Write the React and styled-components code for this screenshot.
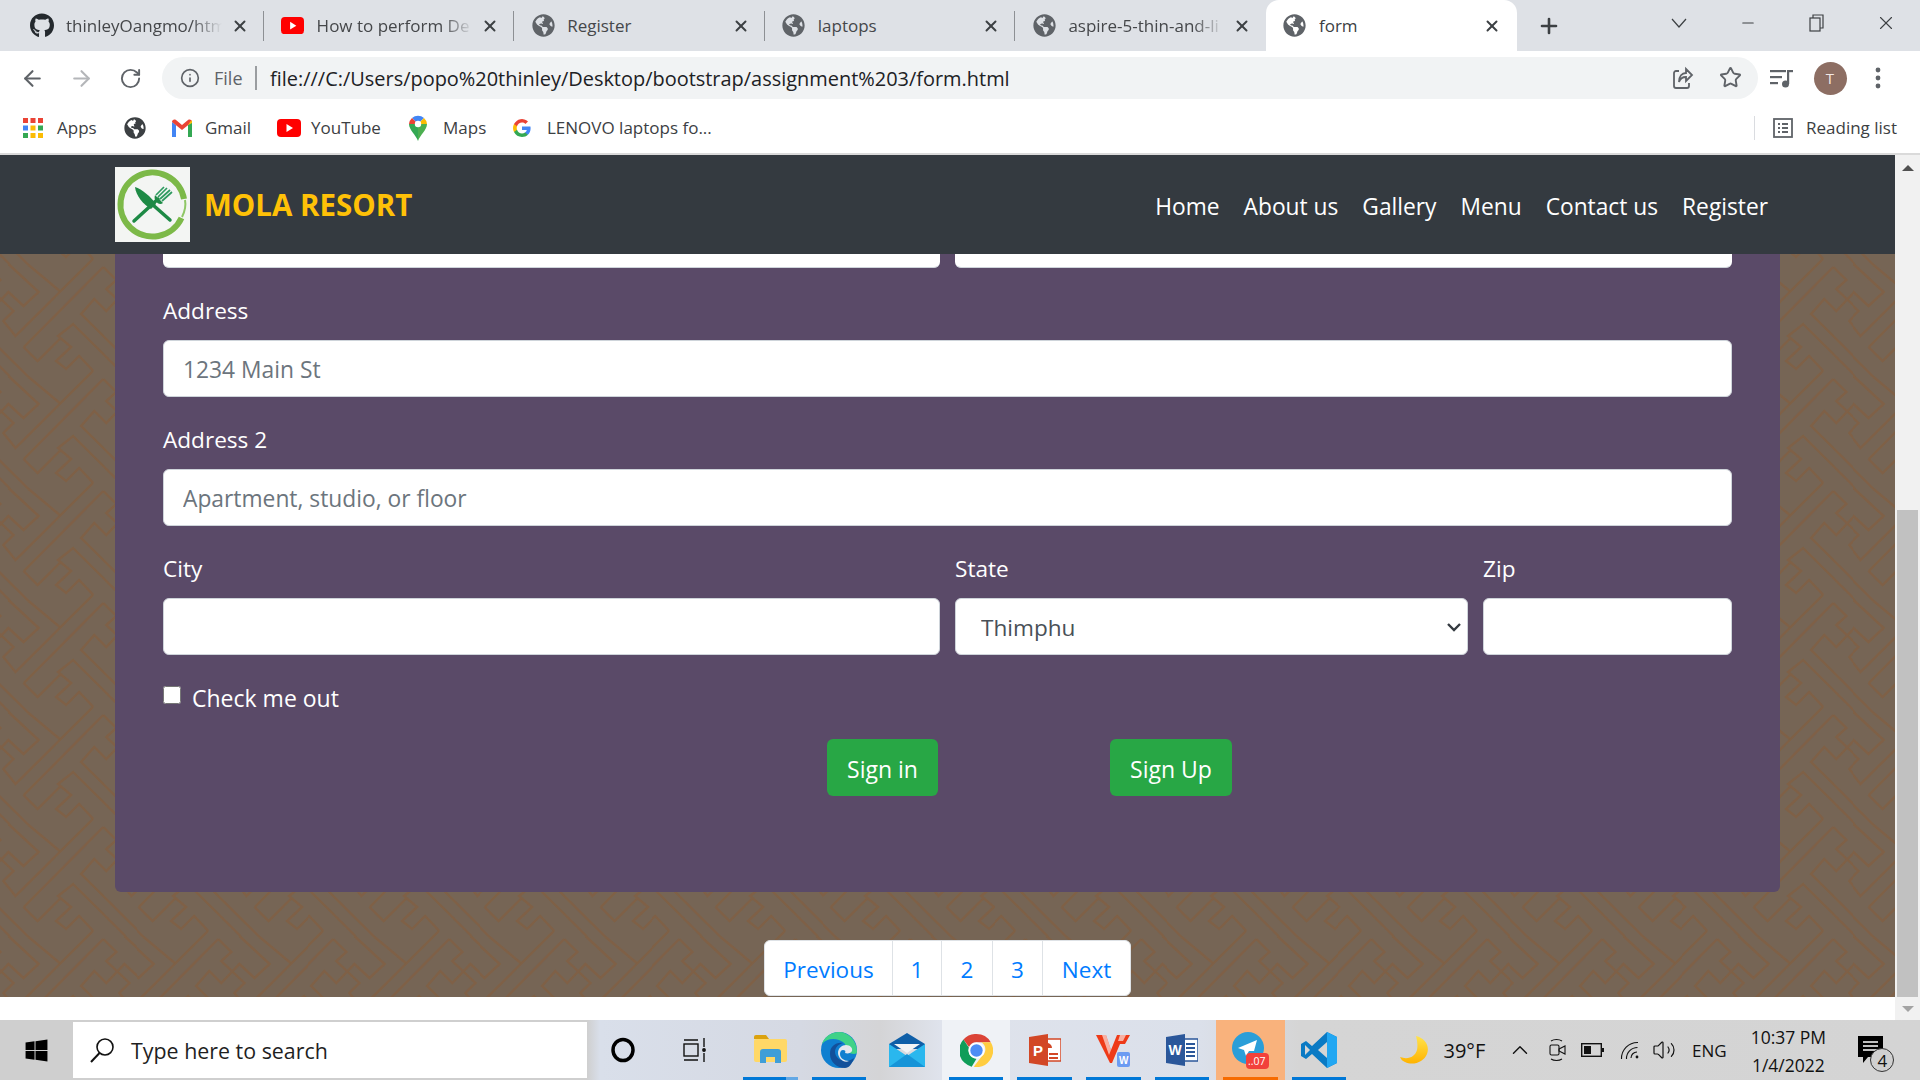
import React from 'react';
import styled, { createGlobalStyle } from 'styled-components';
import { ArrowLeft, ArrowRight, RotateCw, Info, Star, X, Plus, Minus, ChevronUp, Volume2 } from 'lucide-react';
import { FaGithub, FaGlobeAmericas, FaWindows } from 'react-icons/fa';

const UI_FONT = '"Open Sans", "Noto Sans", sans-serif';

const TILE_W = 115.33;
const TILE_H = 112;
const keyLines = [
  '52,3 65,16 55,25 78,47 68,57 80,72 118,34 157,-5',
  '42,107 28,92 15,105 5,97 20,83 7,72 22,60 74,112',
  '73,0 103,28 88,42 73,28 55,47 43,35 30,50 93,113',
  '93,1 124,27',
  '52,3 -27,83',
  '88,83 102,97 125,74',
];
const tileCopies = [-1, 0, 1].flatMap((i) =>
  [-1, 0, 1].map((j) => `<g transform="translate(${i * TILE_W} ${j * TILE_H})">${keyLines.map((p) => `<polyline points="${p}"/>`).join('')}</g>`)
);
const tileSvg = `<svg xmlns="http://www.w3.org/2000/svg" width="${TILE_W}" height="${TILE_H}" viewBox="0 0 ${TILE_W} ${TILE_H}"><defs><filter id="b" x="-5%" y="-5%" width="110%" height="110%"><feGaussianBlur stdDeviation="0.6"/></filter></defs><rect width="100%" height="100%" fill="#766555"/><g filter="url(#b)" fill="none" stroke="#7f6146" stroke-width="2.4">${tileCopies.join('')}</g></svg>`;
const tileUrl = `url("data:image/svg+xml,${encodeURIComponent(tileSvg)}")`;

const chevronUrl = `url("data:image/svg+xml,${encodeURIComponent('<svg xmlns="http://www.w3.org/2000/svg" width="16" height="16" viewBox="0 0 16 16"><path d="M2 5l6 6 6-6" fill="none" stroke="#343a40" stroke-width="2.4"/></svg>')}")`;

const GlobalStyle = createGlobalStyle`
  html, body { margin: 0; padding: 0; overflow: hidden; }
  body { font-family: ${UI_FONT}; }
  * { box-sizing: border-box; }
`;

const Screen = styled.div`
  width: 1920px;
  height: 1080px;
  display: flex;
  flex-direction: column;
  overflow: hidden;
  background: #fff;
`;

/* browser chrome */
const TabStrip = styled.div`
  height: 51px;
  flex: none;
  display: flex;
  background: #dee1e6;
  padding-left: 13px;
`;

const Tab = styled.div`
  position: relative;
  width: 250.6px;
  height: 51px;
  display: flex;
  align-items: center;
  padding-left: 17px;
  color: ${(p) => (p.$active ? '#3c4043' : '#45474a')};
  background: ${(p) => (p.$active ? '#fff' : 'transparent')};
  border-radius: 13px 13px 0 0;
  &::after {
    content: '';
    position: absolute;
    right: 0;
    top: 11px;
    height: 30px;
    width: 1px;
    background: ${(p) => (p.$divider ? '#8d9094' : 'transparent')};
  }
`;

const Favicon = styled.span`
  width: 24px;
  height: 24px;
  flex: none;
  display: flex;
  align-items: center;
  justify-content: center;
  color: ${(p) => p.$color || '#5f6368'};
  margin-right: 12px;
`;

const TabTitle = styled.span`
  width: 156px;
  flex: none;
  font-size: 17px;
  white-space: nowrap;
  overflow: hidden;
  ${(p) => p.$fade && 'mask-image: linear-gradient(90deg, #000 80%, transparent 100%);'}
`;

const TabClose = styled.span`
  width: 18px;
  height: 18px;
  margin-left: 8.5px;
  flex: none;
  display: flex;
  align-items: center;
  justify-content: center;
  color: #3c4043;
`;

const NewTab = styled.span`
  margin-left: 20px;
  height: 51px;
  display: flex;
  align-items: center;
  color: #3c4043;
`;

const WindowControls = styled.div`
  margin-left: auto;
  display: flex;
`;

const WindowButton = styled.span`
  width: 69px;
  height: 45px;
  display: flex;
  align-items: center;
  justify-content: center;
  color: #3c4043;
`;

const Toolbar = styled.div`
  height: 51px;
  flex: none;
  display: flex;
  align-items: center;
  padding: 3px 0 0 8px;
  background: #fff;
`;

const NavButton = styled.span`
  width: 49px;
  display: flex;
  justify-content: center;
  color: ${(p) => (p.$dim ? '#b4b6b9' : '#5f6368')};
`;

const Omnibox = styled.div`
  width: 1596px;
  height: 42px;
  margin-left: 7px;
  border-radius: 21px;
  background: #f1f3f4;
  display: flex;
  align-items: center;
  padding-left: 18px;
  font-size: 18px;
`;

const SiteLabel = styled.span`
  width: 41px;
  margin-left: 14px;
  color: #5f6368;
  font-size: 18px;
`;

const UrlDivider = styled.span`
  width: 2px;
  height: 24px;
  background: #9a9da0;
`;

const UrlText = styled.span`
  margin-left: 13px;
  color: #202124;
  font-size: 19.95px;
  white-space: nowrap;
`;

const OmniActions = styled.div`
  margin-left: auto;
  display: flex;
  gap: 25px;
  padding-right: 16px;
  color: #5f6368;
`;

const ToolbarIcon = styled.span`
  width: 48px;
  display: flex;
  justify-content: center;
  color: #5f6368;
  &:first-of-type { margin-left: 10px; }
`;

const Avatar = styled.span`
  width: 33px;
  height: 33px;
  border-radius: 50%;
  background: #8d6e63;
  color: #f3e9e5;
  font-size: 15px;
  display: flex;
  align-items: center;
  justify-content: center;
`;

const BookmarksBar = styled.div`
  height: 53px;
  flex: none;
  display: flex;
  align-items: center;
  padding: 0 0 0 23px;
  background: #fff;
  border-bottom: 2px solid #dadada;
  font-size: 17px;
  color: #3c4043;
`;

const Bookmark = styled.div`
  width: ${(p) => p.$w}px;
  flex: none;
  display: flex;
  align-items: center;
  white-space: nowrap;
`;

const BookmarkIcon = styled.span`
  width: 34px;
  flex: none;
  display: flex;
`;

const ReadingList = styled.div`
  margin-left: auto;
  height: 24px;
  display: flex;
  align-items: center;
  gap: 13px;
  padding-left: 18px;
  width: 166px;
  border-left: 1px solid #dadce0;
`;

/* page inside the browser */
const Viewport = styled.div`
  flex: 1;
  min-height: 0;
  display: flex;
`;

const Page = styled.div`
  flex: 1;
  min-width: 0;
  display: flex;
  flex-direction: column;
  background: #fff;
  padding-bottom: 23px;
`;

const Navbar = styled.nav`
  height: 99px;
  flex: none;
  display: flex;
  align-items: center;
  padding: 0 127px 0 115px;
  background: #343a40;
`;

const Brand = styled.span`
  margin-left: 14px;
  color: #ffc107;
  font-size: 29.5px;
  font-weight: 700;
  white-space: nowrap;
`;

const NavLinks = styled.div`
  margin-left: auto;
  padding-top: 3px;
  display: flex;
  gap: 24px;
`;

const NavLink = styled.a`
  color: #fff;
  font-size: 22.75px;
  white-space: nowrap;
`;

const Backdrop = styled.main`
  flex: 1;
  min-height: 0;
  display: flex;
  flex-direction: column;
  align-items: center;
  background-image: ${tileUrl};
  background-size: ${TILE_W}px ${TILE_H}px;
  background-position: 51px 10px;
`;

const FormPanel = styled.form`
  width: 1665px;
  height: 638px;
  flex: none;
  padding: 0 48px;
  background: #5a4a68;
  border-radius: 0 0 6px 6px;
`;

const Row = styled.div`
  display: flex;
  gap: 15px;
`;

const Field = styled.div`
  flex: ${(p) => p.$flex || 1} 1 0;
  min-width: 0;
  margin-top: 24px;
`;

const CutField = styled.div`
  flex: 1;
  height: 14px;
  background: #fff;
  border-radius: 0 0 6px 6px;
  border-bottom: 1.5px solid #ced4da;
`;

const Label = styled.label`
  display: block;
  height: 36px;
  margin-bottom: 12px;
  color: #fff;
  font-size: 22.6px;
  line-height: 38px;
`;

const TextInput = styled.input`
  display: block;
  width: 100%;
  height: 57px;
  padding: 2px 18px 0 19px;
  background: #fff;
  border: 1.5px solid #ced4da;
  border-radius: 6px;
  font-family: ${UI_FONT};
  font-size: 22.8px;
  color: #495057;
  &::placeholder { color: #6c757d; opacity: 1; }
`;

const SelectInput = styled.select`
  display: block;
  width: 100%;
  height: 57px;
  padding: 2px 40px 0 25px;
  appearance: none;
  background: #fff ${chevronUrl} no-repeat right 5px center;
  border: 1.5px solid #ced4da;
  border-radius: 6px;
  font-family: ${UI_FONT};
  font-size: 22.6px;
  color: #495057;
`;

const CheckRow = styled.div`
  height: 36px;
  margin-top: 24px;
  padding-top: 2px;
  display: flex;
  align-items: center;
  color: #fff;
  font-size: 23px;
`;

const CheckBox = styled.input`
  width: 18px;
  height: 18px;
  margin: -6px 11px 0 0;
  flex: none;
`;

const ButtonRow = styled.div`
  margin-top: 24px;
  display: flex;
  padding-left: 664px;
  gap: 172px;
`;

const SubmitButton = styled.button`
  width: ${(p) => p.$w}px;
  height: 57px;
  padding: 2px 0 0;
  border: 0;
  border-radius: 6px;
  background: #28a745;
  color: #fff;
  font-family: ${UI_FONT};
  font-size: 23px;
`;

const Pagination = styled.ul`
  list-style: none;
  display: flex;
  margin: 48px 0 0;
  padding: 0;
  background: #fff;
  border: 1.5px solid #dee2e6;
  border-radius: 6px;
`;

const PageItem = styled.li`
  width: ${(p) => p.$w}px;
  height: 54px;
  padding-top: 2px;
  display: flex;
  align-items: center;
  justify-content: center;
  color: #007bff;
  font-size: 22.5px;
  & + & { border-left: 1.5px solid #dee2e6; }
`;

const Scrollbar = styled.div`
  width: 25px;
  flex: none;
  display: flex;
  flex-direction: column;
  background: #f1f1f1;
`;

const ScrollArrow = styled.div`
  height: ${(p) => p.$h}px;
  flex: none;
  display: flex;
  align-items: center;
  justify-content: center;
  &::before {
    content: '';
    border-left: 6px solid transparent;
    border-right: 6px solid transparent;
    ${(p) => (p.$up ? 'border-bottom: 6px solid #505050;' : 'border-top: 6px solid #a3a3a3;')}
  }
`;

const ScrollThumb = styled.div`
  height: 487px;
  margin: auto 2px 0;
  background: #c1c1c1;
`;

/* windows taskbar */
const Taskbar = styled.footer`
  height: 60px;
  flex: none;
  display: flex;
  align-items: center;
  background: linear-gradient(90deg, #cfcfcf 0, #cfcfcf 587px, #d9dfea 600px, #d5d9e3 800px, #d4d4d6 880px, #dfe3ec 940px, #dbe0ea 1200px, #d5d5d5 1300px, #d4d4d4 100%);
`;

const StartButton = styled.span`
  width: 73px;
  flex: none;
  display: flex;
  justify-content: center;
  color: #000;
`;

const SearchBox = styled.div`
  width: 514px;
  height: 56px;
  flex: none;
  display: flex;
  align-items: center;
  gap: 16px;
  padding-left: 16px;
  background: #fff;
  font-size: 21.4px;
  color: #1f1f1f;
`;

const ShellButton = styled.span`
  width: 72px;
  flex: none;
  display: flex;
  justify-content: center;
`;

const AppList = styled.div`
  margin-left: 5px;
  display: flex;
`;

const AppSlot = styled.div`
  position: relative;
  width: 68.6px;
  height: 60px;
  display: flex;
  align-items: center;
  justify-content: center;
  background: ${(p) => p.$bg || 'transparent'};
  &::after {
    content: '';
    position: absolute;
    left: 7px;
    right: 7px;
    bottom: 0;
    height: 3px;
    background: ${(p) => p.$line || 'transparent'};
  }
`;

const Tray = styled.div`
  margin-left: 47px;
  display: flex;
  align-items: center;
  height: 100%;
  flex: 1;
  color: #111;
`;

const TrayItem = styled.span`
  width: ${(p) => p.$w}px;
  flex: none;
  display: flex;
  justify-content: center;
  align-items: center;
  font-size: ${(p) => p.$size || 17}px;
  white-space: nowrap;
`;

const Clock = styled.div`
  width: 96px;
  flex: none;
  text-align: center;
  font-size: 17.5px;
  line-height: 28px;
  padding-top: 2px;
`;

const NotifyWrap = styled.div`
  position: relative;
  margin-left: 22px;
  width: 26px;
  height: 28px;
`;

const NotifyBadge = styled.span`
  position: absolute;
  left: 12px;
  top: 12px;
  width: 24px;
  height: 24px;
  border: 1px solid #333;
  border-radius: 50%;
  background: #d0d0d0;
  display: flex;
  align-items: center;
  justify-content: center;
  font-size: 17px;
  color: #111;
`;

const Globe = ({ size = 23 }) => <FaGlobeAmericas size={size} />;

const YoutubeIcon = ({ w = 24 }) => (
  <svg width={w} height={w * 0.75} viewBox="0 0 24 18">
    <rect width="24" height="18" rx="4" fill="#f00" />
    <path d="M9.5 5l6.5 4-6.5 4z" fill="#fff" />
  </svg>
);

const AppsIcon = () => (
  <svg width="20" height="20" viewBox="0 0 20 20">
    {['#ea4335', '#ea4335', '#ea4335', '#4285f4', '#fbbc04', '#34a853', '#34a853', '#fbbc04', '#fbbc04'].map((c, i) => (
      <rect key={i} x={(i % 3) * 7.5} y={Math.floor(i / 3) * 7.5} width="5" height="5" fill={c} />
    ))}
  </svg>
);

const GmailIcon = () => (
  <svg width="22" height="18" viewBox="0 0 22 18">
    <path d="M1 18V3l4 3v12z" fill="#4285f4" />
    <path d="M17 18V6l4-3v15z" fill="#34a853" />
    <path d="M1 3c0-2 2-3 4-2l6 5 6-5c2-1 4 0 4 2l-10 8z" fill="#ea4335" />
    <path d="M17 6l2-3c1-2 2-2 2 0v1z" fill="#fbbc04" />
  </svg>
);

const MapsIcon = () => (
  <svg width="18" height="26" viewBox="0 0 18 26">
    <path d="M9 26C7 20 0 15 0 9h9z" fill="#34a853" />
    <path d="M9 26c2-6 9-11 9-17H9z" fill="#4caf50" />
    <path d="M3 3a9 9 0 0 1 12 0L9 9z" fill="#4285f4" />
    <path d="M3 3a9 9 0 0 0-3 6h9z" fill="#ea4335" />
    <path d="M15 3a9 9 0 0 1 3 6H9z" fill="#fbbc04" />
    <circle cx="9" cy="9" r="3.2" fill="#fff" />
  </svg>
);

const GoogleIcon = () => (
  <svg width="18" height="18" viewBox="0 0 18 18">
    <path d="M17.6 9.2c0-.6-.1-1.3-.2-1.8H9v3.5h4.8a4 4 0 0 1-1.800 2.700v2.200h2.900c1.700-1.600 2.700-3.900 2.700-6.600z" fill="#4285f4" />
    <path d="M9 18c2.400 0 4.500-.8 5.900-2.200L12 13.600c-.8.500-1.800.9-3 .9-2.300 0-4.300-1.600-5-3.700H1v2.300A9 9 0 0 0 9 18z" fill="#34a853" />
    <path d="M4 10.700a5.400 5.400 0 0 1 0-3.400V5H1a9 9 0 0 0 0 8z" fill="#fbbc05" />
    <path d="M9 3.600c1.300 0 2.500.4 3.400 1.300L15 2.400A9 9 0 0 0 1 5l3 2.300c.7-2.100 2.700-3.700 5-3.700z" fill="#ea4335" />
  </svg>
);

const ShareIcon = () => (
  <svg width="22" height="24" viewBox="0 0 22 24" fill="none" stroke="#5f6368" strokeWidth="1.800">
    <path d="M7 5H4a2 2 0 0 0-2 2v13a2 2 0 0 0 2 2h11a2 2 0 0 0 2-2v-3" />
    <path d="M14 3l6 6-6 6v-4c-4 0-6 2-7 5 0-6 3-9 7-9z" />
  </svg>
);

const MediaIcon = () => (
  <svg width="24" height="22" viewBox="0 0 24 22" fill="#5f6368">
    <rect x="0" y="3" width="16" height="2.200" />
    <rect x="0" y="9" width="12" height="2.200" />
    <rect x="0" y="15" width="8" height="2.200" />
    <rect x="17" y="3" width="2.200" height="14" />
    <rect x="17" y="3" width="6" height="2.200" />
    <circle cx="15.500" cy="17" r="3.500" />
  </svg>
);

const DotsIcon = () => (
  <svg width="6" height="24" viewBox="0 0 6 24" fill="#5f6368">
    <circle cx="3" cy="4" r="2.400" />
    <circle cx="3" cy="12" r="2.400" />
    <circle cx="3" cy="20" r="2.400" />
  </svg>
);

const ReadingIcon = () => (
  <svg width="20" height="20" viewBox="0 0 20 20" fill="none" stroke="#5f6368" strokeWidth="1.800">
    <rect x="1" y="1" width="18" height="18" />
    <path d="M5 6h2M9 6h6M5 10h2M9 10h6M5 14h2M9 14h6" />
  </svg>
);

const RestoreIcon = () => (
  <svg width="16" height="18" viewBox="0 0 16 18" fill="none" stroke="#3c4043" strokeWidth="1.200">
    <rect x="1" y="4" width="10" height="13" />
    <path d="M4 4V1h10v13h-3" />
  </svg>
);

const ThinChevron = () => (
  <svg width="16" height="10" viewBox="0 0 16 10" fill="none" stroke="#3c4043" strokeWidth="1.200">
    <path d="M1 1l7 8 7-8" />
  </svg>
);

const ResortLogo = () => (
  <svg width="75" height="75" viewBox="0 0 75 75">
    <rect width="75" height="75" fill="#f3f5f3" />
    <path d="M66.500 51A32 32 0 1 1 69 32" fill="none" stroke="#7cb948" strokeWidth="6" />
    <path d="M70 33c1 5 0 11-3 17" fill="none" stroke="#8fc766" strokeWidth="2" />
    <path d="M20 20C27 22 36 30 41 37L36 42C28 37 21 29 20 20z" fill="#1d8a45" />
    <path d="M38 38L55 53M19 54L43 32" fill="none" stroke="#1d8a45" strokeWidth="3.500" strokeLinecap="round" />
    <path d="M40 28L48 36C44 39 38 34 40 28z" fill="#1d8a45" />
    <path d="M41 28L49 20M43 30L52 21M45 32L55 23M47 34L57 25" fill="none" stroke="#2d9a5f" strokeWidth="1.700" />
  </svg>
);

const SearchGlass = () => (
  <svg width="26" height="26" viewBox="0 0 26 26" fill="none" stroke="#111" strokeWidth="1.600">
    <circle cx="16" cy="10" r="8" />
    <path d="M10.500 16L2 25" strokeWidth="2" />
  </svg>
);

const ExplorerIcon = () => (
  <svg width="33" height="30" viewBox="0 0 33 30">
    <path d="M0 2a2 2 0 0 1 2-2h10l3 4H0z" fill="#dba20e" />
    <rect y="4" width="33" height="23" rx="2" fill="#ffd867" />
    <path d="M6 28V17a3 3 0 0 1 3-3h15a3 3 0 0 1 3 3v11h-6v-6h-9v6z" fill="#3f9ed8" />
  </svg>
);

const EdgeIcon = () => (
  <svg width="36" height="36" viewBox="0 0 36 36">
    <circle cx="18" cy="18" r="18" fill="#0f7fd0" />
    <path d="M36 20C36 8 27 0 18 0 10 0 3 5 1 12c4-5 11-6 17-4 6 2 9 7 7 12 5 2 11 3 11 0z" fill="#3fd287" />
    <path d="M33 26c-3 2-5 3-8 3-6 0-11-4-11-9 0-5 4-8 8-9-7-1-13 3-13 11 0 8 7 14 15 14 4 0 7-4 9-10z" fill="#13509a" />
    <path d="M17 21c0-5 4-8 8-8 4 0 7 3 6 6-1 2-4 3-7 2 1-2 0-3-2-3-2 0-3 2-3 4 0 4 4 7 9 7-5 3-11-3-11-8z" fill="#e3e7ef" />
  </svg>
);

const MailIcon = () => (
  <svg width="36" height="34" viewBox="0 0 36 34">
    <path d="M0 11L18 0l18 11v5H0z" fill="#0f5fa8" />
    <path d="M5 11h26L18 20z" fill="#f3f4f5" />
    <path d="M0 11l18 12 18-12v23H0z" fill="#2ab7ee" />
    <path d="M0 34l18-13 18 13z" fill="#1694d8" />
  </svg>
);

const ChromeIcon = () => (
  <svg width="33" height="33" viewBox="0 0 48 48">
    <path d="M24 0a24 24 0 0 1 20.800 12H24a12 12 0 0 0-11 7L5 8A24 24 0 0 1 24 0z" fill="#db4437" />
    <path d="M5 8l8 12a12 12 0 0 0 11 16l-7 11.500A24 24 0 0 1 5 8z" fill="#0f9d58" />
    <path d="M44.800 12A24 24 0 0 1 20 47.700L32 32a12 12 0 0 0-1-20z" fill="#ffcd40" />
    <circle cx="24" cy="24" r="11.500" fill="#fff" />
    <circle cx="24" cy="24" r="9" fill="#4e8df5" />
  </svg>
);

const PowerPointIcon = () => (
  <svg width="32" height="32" viewBox="0 0 32 32">
    <rect x="14" y="5" width="18" height="22" fill="#fff" stroke="#d24726" strokeWidth="1.500" />
    <path d="M18 9a5 5 0 0 1 5 5h-5zM20 19h9v2h-9zM20 23h9v2h-9z" fill="#d24726" />
    <path d="M0 3l19-3v32L0 29z" fill="#d24726" />
    <text x="4" y="22" fontSize="15" fontWeight="700" fill="#fff" fontFamily="Liberation Sans, sans-serif">P</text>
  </svg>
);

const WpsIcon = () => (
  <svg width="34" height="34" viewBox="0 0 34 34">
    <path d="M0 2h10l5 15L21 2h13l-5 9H24l-8 19h-2z" fill="#ee3a18" />
    <path d="M6 2h4l5 15-2 5zM24 2h6l-3 6h-5z" fill="#fff" opacity="0.6" />
    <rect x="21" y="19" width="13" height="15" rx="2" fill="#6c9bf2" />
    <text x="23" y="31" fontSize="10" fontWeight="700" fill="#fff" fontFamily="Liberation Sans, sans-serif">W</text>
  </svg>
);

const WordIcon = () => (
  <svg width="32" height="32" viewBox="0 0 32 32">
    <rect x="14" y="5" width="18" height="22" fill="#fff" stroke="#2b579a" strokeWidth="1.500" />
    <path d="M20 9h9v2h-9zM20 13h9v2h-9zM20 17h9v2h-9zM20 21h9v2h-9z" fill="#2b579a" />
    <path d="M0 3l19-3v32L0 29z" fill="#2b579a" />
    <text x="2.500" y="21" fontSize="14" fontWeight="700" fill="#fff" fontFamily="Liberation Sans, sans-serif">W</text>
  </svg>
);

const TelegramIcon = () => (
  <svg width="40" height="40" viewBox="0 0 40 40">
    <circle cx="18" cy="18" r="16" fill="#2b9ed8" />
    <path d="M8 18l19-8-3 11-5 0-3 5-2-6z" fill="#fff" />
    <rect x="16" y="23" width="23" height="16" rx="4" fill="#f2413b" />
    <text x="18" y="35" fontSize="10.500" fill="#fff" fontFamily="Open Sans, sans-serif">..07</text>
  </svg>
);

const VsCodeIcon = () => (
  <svg width="36" height="36" viewBox="0 0 36 36">
    <path d="M26 0l10 5v26l-10 5-15-14-6 5-5-3v-12l5-3 6 5z" fill="#0a7ac4" />
    <path d="M26 0l10 5v26l-10 5z" fill="#22a7f2" />
    <path d="M26 10l-9 8 9 8z" fill="#d5d5d5" />
    <path d="M4 13l5 5-5 5z" fill="#d5d5d5" />
  </svg>
);

const MoonIcon = () => (
  <svg width="28" height="28" viewBox="0 0 28 28">
    <defs>
      <linearGradient id="moon" x1="0" y1="0" x2="0" y2="1">
        <stop offset="0" stopColor="#ffe34d" />
        <stop offset="1" stopColor="#ffb300" />
      </linearGradient>
    </defs>
    <path d="M16 0c9 2 14 10 11 18-3 8-14 12-22 8-3-1-4-3-5-5 8 3 15 0 17-7 1-5 0-10-1-14z" fill="url(#moon)" />
  </svg>
);

const CameraIcon = () => (
  <svg width="17" height="24" viewBox="0 0 17 24" fill="none" stroke="#111" strokeWidth="1.100">
    <rect x="1" y="7" width="9" height="10" rx="1.500" />
    <path d="M10 11l6-3v8l-6-3zM2 3c3-2 8-2 11 0M2 21c3 2 8 2 11 0" />
  </svg>
);

const BatteryIcon = () => (
  <svg width="23" height="14" viewBox="0 0 23 14">
    <rect x="0.700" y="0.700" width="19.600" height="12.600" fill="none" stroke="#111" strokeWidth="1.400" />
    <rect x="3" y="3" width="7" height="8" fill="#111" />
    <rect x="21" y="5" width="2" height="4" fill="#111" />
  </svg>
);

const WifiFanIcon = () => (
  <svg width="20" height="20" viewBox="0 0 20 20" fill="none" stroke="#111" strokeWidth="1.100">
    <path d="M11 18a6 6 0 0 1 6-6M6.500 19a11 11 0 0 1 11-11.500M1.500 19A16 16 0 0 1 18 2.500" />
    <circle cx="17" cy="17" r="1.400" fill="#111" stroke="none" />
  </svg>
);

const NotifyIcon = () => (
  <svg width="25" height="27" viewBox="0 0 25 27">
    <path d="M0 0h25v21H10l-5 6v-6H0z" fill="#000" />
    <path d="M5 6h15M5 10h15M5 14h15" stroke="#fff" strokeWidth="1.400" />
  </svg>
);

const tabs = [
  { title: 'thinleyOangmo/htm', icon: <FaGithub size={25} />, color: '#24292e', fade: true, divider: true },
  { title: 'How to perform De', icon: <YoutubeIcon w={23} />, fade: true, divider: true },
  { title: 'Register', icon: <Globe />, divider: true },
  { title: 'laptops', icon: <Globe />, divider: true },
  { title: 'aspire-5-thin-and-li', icon: <Globe />, fade: true },
  { title: 'form', icon: <Globe />, active: true },
];

const bookmarks = [
  { name: 'Apps', w: 101, icon: <AppsIcon /> },
  { name: '', w: 47, icon: <Globe size={22} /> },
  { name: 'Gmail', w: 106, icon: <GmailIcon /> },
  { name: 'YouTube', w: 132, icon: <YoutubeIcon w={24} /> },
  { name: 'Maps', w: 104, icon: <MapsIcon /> },
  { name: 'LENOVO laptops fo...', w: 260, icon: <GoogleIcon /> },
];

const apps = [
  { icon: <ExplorerIcon />, line: 'linear-gradient(90deg, #0078d7 78%, #63a8e5 78%)' },
  { icon: <EdgeIcon />, line: '#0078d7' },
  { icon: <MailIcon /> },
  { icon: <ChromeIcon />, line: '#0078d7', bg: '#eff2f6' },
  { icon: <PowerPointIcon />, line: '#0078d7' },
  { icon: <WpsIcon />, line: '#0078d7' },
  { icon: <WordIcon />, line: '#0078d7' },
  { icon: <TelegramIcon />, line: '#f76b00', bg: '#f9b27c' },
  { icon: <VsCodeIcon />, line: '#0078d7' },
];

const App = () => {
  return (
    <Screen>
      <GlobalStyle />
      <TabStrip>
        {tabs.map((tab) => (
          <Tab key={tab.title} $active={tab.active} $divider={tab.divider}>
            <Favicon $color={tab.color}>{tab.icon}</Favicon>
            <TabTitle $fade={tab.fade}>{tab.title}</TabTitle>
            <TabClose><X size={18} strokeWidth={2.6} /></TabClose>
          </Tab>
        ))}
        <NewTab><Plus size={24} strokeWidth={2.6} /></NewTab>
        <WindowControls>
          <WindowButton><ThinChevron /></WindowButton>
          <WindowButton><Minus size={18} strokeWidth={1.4} /></WindowButton>
          <WindowButton><RestoreIcon /></WindowButton>
          <WindowButton><X size={22} strokeWidth={1.2} /></WindowButton>
        </WindowControls>
      </TabStrip>

      <Toolbar>
        <NavButton><ArrowLeft size={25} /></NavButton>
        <NavButton $dim><ArrowRight size={25} /></NavButton>
        <NavButton><RotateCw size={23} /></NavButton>
        <Omnibox>
          <Info size={20} color="#5f6368" />
          <SiteLabel>File</SiteLabel>
          <UrlDivider />
          <UrlText>file:///C:/Users/popo%20thinley/Desktop/bootstrap/assignment%203/form.html</UrlText>
          <OmniActions>
            <ShareIcon />
            <Star size={23} />
          </OmniActions>
        </Omnibox>
        <ToolbarIcon $first><MediaIcon /></ToolbarIcon>
        <ToolbarIcon><Avatar>T</Avatar></ToolbarIcon>
        <ToolbarIcon><DotsIcon /></ToolbarIcon>
      </Toolbar>

      <BookmarksBar>
        {bookmarks.map((b) => (
          <Bookmark key={b.w} $w={b.w}>
            <BookmarkIcon>{b.icon}</BookmarkIcon>
            {b.name}
          </Bookmark>
        ))}
        <ReadingList>
          <ReadingIcon />
          Reading list
        </ReadingList>
      </BookmarksBar>

      <Viewport>
        <Page>
          <Navbar>
            <ResortLogo />
            <Brand>MOLA RESORT</Brand>
            <NavLinks>
              {['Home', 'About us', 'Gallery', 'Menu', 'Contact us', 'Register'].map((link) => (
                <NavLink key={link}>{link}</NavLink>
              ))}
            </NavLinks>
          </Navbar>
          <Backdrop>
            <FormPanel>
              <Row>
                <CutField />
                <CutField />
              </Row>
              <Field>
                <Label>Address</Label>
                <TextInput placeholder="1234 Main St" />
              </Field>
              <Field>
                <Label>Address 2</Label>
                <TextInput placeholder="Apartment, studio, or floor" />
              </Field>
              <Row>
                <Field $flex={777}>
                  <Label>City</Label>
                  <TextInput />
                </Field>
                <Field $flex={513}>
                  <Label>State</Label>
                  <SelectInput defaultValue="Thimphu">
                    <option>Thimphu</option>
                    <option>Paro</option>
                  </SelectInput>
                </Field>
                <Field $flex={249}>
                  <Label>Zip</Label>
                  <TextInput />
                </Field>
              </Row>
              <CheckRow>
                <CheckBox type="checkbox" />
                Check me out
              </CheckRow>
              <ButtonRow>
                <SubmitButton type="button" $w={111}>Sign in</SubmitButton>
                <SubmitButton type="button" $w={122}>Sign Up</SubmitButton>
              </ButtonRow>
            </FormPanel>
            <Pagination>
              <PageItem $w={127}>Previous</PageItem>
              <PageItem $w={49}>1</PageItem>
              <PageItem $w={51}>2</PageItem>
              <PageItem $w={50}>3</PageItem>
              <PageItem $w={88}>Next</PageItem>
            </Pagination>
          </Backdrop>
        </Page>
        <Scrollbar>
          <ScrollArrow $h={25} $up />
          <ScrollThumb />
          <ScrollArrow $h={23} />
        </Scrollbar>
      </Viewport>

      <Taskbar>
        <StartButton><FaWindows size={25} /></StartButton>
        <SearchBox>
          <SearchGlass />
          Type here to search
        </SearchBox>
        <ShellButton>
          <svg width="24" height="26" viewBox="0 0 24 26"><ellipse cx="12" cy="13" rx="10" ry="10.500" fill="none" stroke="#000" strokeWidth="3.500" /></svg>
        </ShellButton>
        <ShellButton>
          <svg width="24" height="26" viewBox="0 0 24 26" fill="none" stroke="#111" strokeWidth="1.400">
            <rect x="1" y="7" width="14" height="12" />
            <path d="M1 3h14M1 23h14M21 1v9M21 16v9" />
            <circle cx="21" cy="13" r="1.200" fill="#111" />
          </svg>
        </ShellButton>
        <AppList>
          {apps.map((app, i) => (
            <AppSlot key={i} $line={app.line} $bg={app.bg}>{app.icon}</AppSlot>
          ))}
        </AppList>
        <Tray>
          <TrayItem $w={28}><MoonIcon /></TrayItem>
          <TrayItem $w={72} $size={20}>39°F</TrayItem>
          <TrayItem $w={40}><ChevronUp size={26} strokeWidth={1.3} /></TrayItem>
          <TrayItem $w={34}><CameraIcon /></TrayItem>
          <TrayItem $w={36}><BatteryIcon /></TrayItem>
          <TrayItem $w={40}><WifiFanIcon /></TrayItem>
          <TrayItem $w={28}><Volume2 size={24} strokeWidth={1.2} /></TrayItem>
          <TrayItem $w={62} $size={17}>ENG</TrayItem>
          <Clock>10:37 PM<br />1/4/2022</Clock>
          <NotifyWrap>
            <NotifyIcon />
            <NotifyBadge>4</NotifyBadge>
          </NotifyWrap>
        </Tray>
      </Taskbar>
    </Screen>
  );
};

export default App;
